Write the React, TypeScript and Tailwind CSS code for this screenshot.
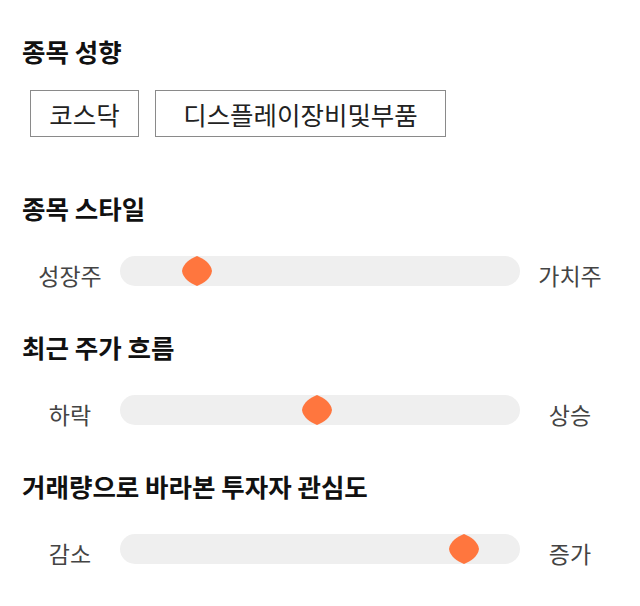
import React from 'react'

interface SliderRow {
  title: string
  left: string
  right: string
  value: number
}

const sectors = [
  { name: '코스닥', width: 'w-[109px]' },
  { name: '디스플레이장비및부품', width: 'w-[291px]' },
]

const rows: SliderRow[] = [
  { title: '종목 스타일', left: '성장주', right: '가치주', value: 16.8 },
  { title: '최근 주가 흐름', left: '하락', right: '상승', value: 49.1 },
  { title: '거래량으로 바라본 투자자 관심도', left: '감소', right: '증가', value: 88.9 },
]

const TRACK_W = 400
const THUMB_W = 30

function Thumb() {
  return (
    <svg width="30" height="30" viewBox="0 0 30 30">
      <path
        d="M15 0 C22 3 29 7.5 30 15 C29 22.5 22 27 15 30 C8 27 1 22.5 0 15 C1 7.5 8 3 15 0 Z"
        fill="#ff763e"
      />
    </svg>
  )
}

function Slider({ row }: { row: SliderRow }) {
  const offset = ((TRACK_W - THUMB_W) * row.value) / 100
  return (
    <div className="mt-[33px] flex h-[30px] items-start px-[20px]">
      {/* labels sit a few px under the track centre */}
      <div className="h-[30px] w-[100px] text-center text-[23px] leading-[38px] text-[#444]">{row.left}</div>
      <div className="relative h-[30px] w-[400px] rounded-[15px] bg-[#efefef]">
        <div className="absolute top-0" style={{ left: offset }}>
          <Thumb />
        </div>
      </div>
      <div className="h-[30px] w-[100px] text-center text-[23px] leading-[38px] text-[#444]">{row.right}</div>
    </div>
  )
}

export default function App() {
  return (
    <div
      className="min-h-[606px] w-[640px] bg-white pt-[36px]"
      style={{ fontFamily: '"Noto Sans CJK KR", "Noto Sans", sans-serif' }}
    >
      <h2 className="ml-[22px] text-[25.5px] font-bold leading-[30px] text-[#111]">종목 성향</h2>
      <div className="ml-[30px] mt-[24px] flex gap-[16px]">
        {sectors.map(s => (
          <div
            key={s.name}
            className={`flex h-[47px] items-center justify-center border border-[#8a8a8a] pt-[2px] text-[25.5px] text-[#222] ${s.width}`}
          >
            {s.name}
          </div>
        ))}
      </div>

      {rows.map((row, idx) => (
        <div key={row.title} className={idx === 0 ? 'mt-[56px]' : 'mt-[46px]'}>
          <h2 className="ml-[22px] text-[25.5px] font-bold leading-[30px] text-[#111]">{row.title}</h2>
          <Slider row={row} />
        </div>
      ))}
    </div>
  )
}
